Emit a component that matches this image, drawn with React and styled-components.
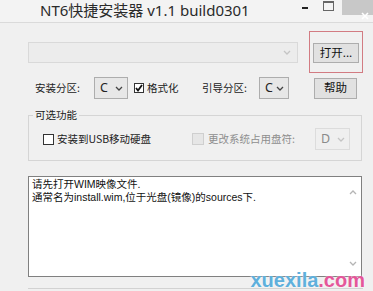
import React from "react";
import styled, { createGlobalStyle } from "styled-components";

const Global = createGlobalStyle`
  body {
    margin: 0;
    background: #f0f0f0;
  }
  * {
    box-sizing: border-box;
  }
`;

const Window = styled.div`
  position: relative;
  width: 373px;
  height: 291px;
  overflow: hidden;
  background: #f0f0f0;
  font-family: "Noto Sans CJK SC", sans-serif;
  color: #1e1e1e;
`;

const TitleBar = styled.div`
  display: flex;
  height: 23px;
  background: #f3f3f3;
  border-bottom: 1px solid #dadada;
`;

const Title = styled.div`
  flex: 1;
  padding-left: 40px;
  font: 15px/20px "Noto Sans", "Noto Sans CJK SC", sans-serif;
  color: #2a2a2a;
  white-space: nowrap;
`;

const Minimize = styled.div`
  width: 20px;
  display: flex;
  justify-content: center;
  padding-top: 7px;
  &::before {
    content: "";
    width: 6px;
    height: 2px;
    background: #222;
  }
`;

const Maximize = styled.div`
  width: 27px;
  display: flex;
  justify-content: center;
  padding-top: 1px;
  &::before {
    content: "";
    width: 9px;
    height: 7px;
    border: 1px solid #666;
    border-top-width: 2px;
  }
`;

const Close = styled.div`
  width: 31px;
  height: 15px;
  background: #c8c8c8;
  padding: 1px 0 0 19px;
`;

const Body = styled.div`
  padding: 8px 10px 0 28px;
`;

const Row = styled.div`
  display: flex;
  align-items: center;
  margin-top: ${(p) => p.$top || 0}px;
  height: ${(p) => p.$h || 24}px;
`;

const Combo = styled.div`
  width: 270px;
  height: 21px;
  border: 1px solid #d9d9d9;
  background: #ececec;
  display: flex;
  justify-content: flex-end;
  align-items: center;
  padding-right: 6px;
`;

const Highlight = styled.div`
  margin-left: 11px;
  width: 54px;
  height: 42px;
  border: 1px solid #d27b82;
  display: flex;
  align-items: center;
  justify-content: center;
  padding-top: 2px;
`;

const Button = styled.button`
  width: ${(p) => p.$w}px;
  height: ${(p) => p.$h}px;
  margin-left: ${(p) => p.$ml || 0}px;
  border: 1px solid #adadad;
  background: #e1e1e1;
  font: 11.5px/1 "Noto Sans CJK SC", sans-serif;
  color: #111;
  padding: 0;
  display: flex;
  align-items: center;
  justify-content: center;
`;

const Label = styled.span`
  width: ${(p) => (p.$w ? p.$w + "px" : "auto")};
  margin-left: ${(p) => p.$ml || 0}px;
  font-size: 10.5px;
  line-height: 14px;
  white-space: nowrap;
  color: ${(p) => (p.$disabled ? "#8e8e8e" : "#222")};
  flex-shrink: 0;
`;

const Select = styled.div`
  width: ${(p) => p.$w}px;
  height: 22px;
  flex-shrink: 0;
  border: 1px solid ${(p) => (p.$disabled ? "#dcdcdc" : "#adadad")};
  background: ${(p) => (p.$disabled ? "#efefef" : "#e7e7e7")};
  display: flex;
  align-items: center;
  justify-content: space-between;
  padding: 0 4px 0 5px;
  font: 12.5px/1 "Noto Sans", sans-serif;
  color: ${(p) => (p.$disabled ? "#8a8a8a" : "#222")};
`;

const Check = styled.div`
  width: ${(p) => p.$size}px;
  height: ${(p) => p.$size}px;
  margin-left: ${(p) => p.$ml || 0}px;
  flex-shrink: 0;
  border: 1px solid ${(p) => (p.$disabled ? "#cfcfcf" : "#333")};
  background: ${(p) => (p.$disabled ? "#e6e6e6" : "#fff")};
  display: flex;
  align-items: center;
  justify-content: center;
`;

const Group = styled.fieldset`
  margin: 8px 0 0;
  padding: 0;
  width: 334px;
  border: 1px solid #d5d5d5;
`;

const Legend = styled.legend`
  margin-left: 4px;
  padding: 0 2px;
  font-size: 10.5px;
  line-height: 14px;
  color: #222;
`;

const GroupRow = styled.div`
  display: flex;
  align-items: center;
  height: 22px;
  margin: 6px 0 10px;
  padding-left: 14px;
`;

const LogBox = styled.div`
  margin-top: 15px;
  width: 334px;
  height: 101px;
  border: 1px solid #808080;
  background: #fff;
  display: flex;
`;

const LogText = styled.div`
  flex: 1;
  padding: 1px 3px;
  font-family: "Liberation Sans", "Noto Sans CJK SC", sans-serif;
  font-size: 10.5px;
  line-height: 12.5px;
  color: #111;
  white-space: nowrap;
`;

const ScrollBar = styled.div`
  width: 17px;
  display: flex;
  flex-direction: column;
  justify-content: space-between;
  align-items: center;
  padding: 13px 0 10px;
`;

const Footer = styled.div`
  margin-top: 11px;
  border-top: 1px solid #d2d2d2;
`;

const Watermark = styled.div`
  position: absolute;
  right: 8px;
  bottom: 1px;
  font: bold 20px/20px "Liberation Sans", Arial, sans-serif;
  color: #5fb0dc;
  text-shadow: 0 0 2px #fff;
  span {
    color: #e4579a;
  }
`;

const Chevron = ({ up, color = "#444" }) => (
  <svg width="8" height="5" viewBox="0 0 8 5">
    <path
      d={up ? "M1 4 L4 1 L7 4" : "M1 1 L4 4 L7 1"}
      stroke={color}
      strokeWidth="1.3"
      fill="none"
    />
  </svg>
);

export default function App() {
  return (
    <>
      <Global />
      <Window>
        <TitleBar>
          <Title>NT6快捷安装器 v1.1 build0301</Title>
          <Minimize />
          <Maximize />
          <Close>
            <svg width="8" height="8" viewBox="0 0 8 8">
              <path d="M1 1 L7 7 M7 1 L1 7" stroke="#fff" strokeWidth="1.6" />
            </svg>
          </Close>
        </TitleBar>
        <Body>
          <Row $h={42}>
            <Combo>
              <Chevron color="#c4c4c4" />
            </Combo>
            <Highlight>
              <Button $w={46} $h={20}>打开...</Button>
            </Highlight>
          </Row>
          <Row $top={3}>
            <Label $w={59} $ml={7}>安装分区:</Label>
            <Select $w={34}>
              C <Chevron />
            </Select>
            <Check $size={10} $ml={6}>
              <svg width="8" height="8" viewBox="0 0 8 8">
                <path d="M1 4 L3 6.5 L7 1" stroke="#111" strokeWidth="1.8" fill="none" />
              </svg>
            </Check>
            <Label $w={55} $ml={3}>格式化</Label>
            <Label $w={57}>引导分区:</Label>
            <Select $w={30}>
              C <Chevron />
            </Select>
            <Button $w={43} $h={21} $ml={25}>帮助</Button>
          </Row>
          <Group>
            <Legend>可选功能</Legend>
            <GroupRow>
              <Check $size={11} />
              <Label $w={135} $ml={3}>安装到USB移动硬盘</Label>
              <Check $size={12} $disabled />
              <Label $w={107} $ml={4} $disabled>更改系统占用盘符:</Label>
              <Select $w={35} $disabled>
                D <Chevron color="#c4c4c4" />
              </Select>
            </GroupRow>
          </Group>
          <LogBox>
            <LogText>
              请先打开WIM映像文件.
              <br />
              通常名为install.wim,位于光盘(镜像)的sources下.
            </LogText>
            <ScrollBar>
              <Chevron up color="#b5b5b5" />
              <Chevron color="#b5b5b5" />
            </ScrollBar>
          </LogBox>
          <Footer />
        </Body>
        <Watermark>
          xuexila<span>.com</span>
        </Watermark>
      </Window>
    </>
  );
}
